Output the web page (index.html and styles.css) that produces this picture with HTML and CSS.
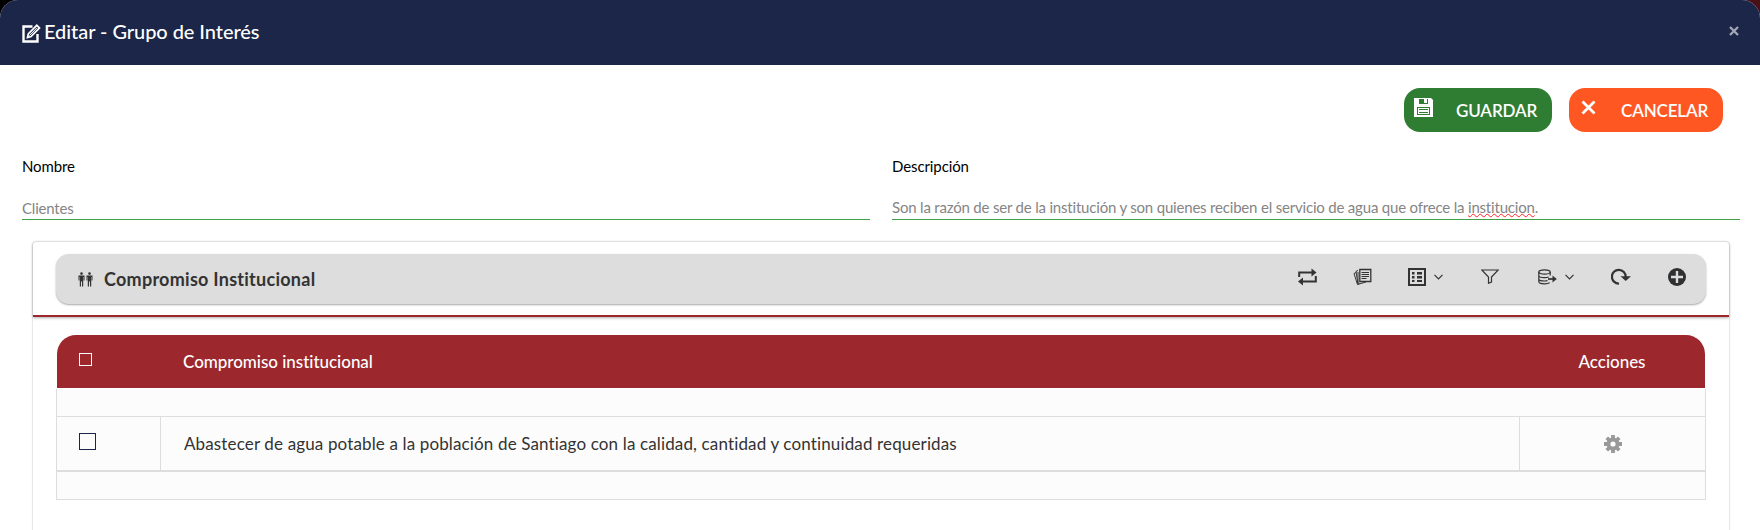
FILE: index.html
```html
<!DOCTYPE html>
<html lang="es">
<head>
<meta charset="utf-8">
<title>Editar - Grupo de Interés</title>
<link rel="stylesheet" href="styles.css">
</head>
<body>
<div class="modal">
  <header class="modal-header">
    <svg class="edit-icon" width="19" height="19" viewBox="0 0 19 19" fill="none" stroke="#fff"><path d="M10.500 2.500H1.500v15h14V10" stroke-width="2.400"/><path d="M5.500 13.500l.8-3.700L14.800 1.300l2.700 2.600L9 12.500z" stroke-width="1.700"/><path d="M7.500 11.500l7.500-7.700" stroke-width="1"/></svg>
    <h1 class="modal-title">Editar - Grupo de Interés</h1>
    <svg class="close" width="10" height="10" viewBox="0 0 10 10" stroke="#a4a8b6" stroke-width="2.300"><path d="M1 1l8 8M9 1L1 9"/></svg>
  </header>
  <div class="actions">
    <button class="btn save"><svg width="19" height="19" viewBox="0 0 19 19"><path fill="#fff" d="M0 0h17l2 2v17H0z"/><path fill="#2e7d32" d="M5 1h9v5H5zM3 9h13v8H3z"/><path fill="#fff" d="M10 1h3v4h-3zM4 10h11v6H4z"/><path stroke="#2e7d32" d="M5 11.500h9M5 14.500h9"/></svg><span class="save-text">GUARDAR</span></button>
    <button class="btn cancel"><svg width="15" height="15" viewBox="0 0 15 15" stroke="#fff" stroke-width="2.800"><path d="M1.500 1.500l12 12M13.500 1.500l-12 12"/></svg><span class="cancel-text">CANCELAR</span></button>
  </div>
  <div class="fields">
    <div class="field"><label class="name-label">Nombre</label><div class="value"><span class="name-value">Clientes</span></div></div>
    <div class="field"><label class="desc-label">Descripción</label><div class="value area"><span class="desc-value">Son la razón de ser de la institución y son quienes reciben el servicio de agua que ofrece la <span class="misspelt">institucion</span>.</span></div></div>
  </div>
  <section class="card">
    <div class="card-head">
      <div class="toolbar">
        <svg class="people" width="15" height="15" viewBox="0 0 15 15" fill="#333"><circle cx="3.500" cy="1.600" r="1.300"/><circle cx="11.500" cy="1.600" r="1.300"/><path d="M.5 3.500h6V8.500h-.9V5h-.4v9.500H4V9.500h-1v5H1.800V5h-.4v3.500H.5zM8.500 3.500h6V8.500h-.9V5h-.4v9.500H12V9.500h-1v5H9.800V5h-.4v3.500h-.9z"/></svg>
        <h2 class="toolbar-title">Compromiso Institucional</h2>
        <div class="tools">
          <svg width="19" height="18" viewBox="0 0 19 18"><path d="M1.200 9V4.500H14M17.800 8v5.500H5" fill="none" stroke="#333" stroke-width="2"/><path fill="#333" d="M13.500.5l5 4-5 4zM5 9.500l-5 4 5 4z"/></svg>
          <svg class="t-docs" width="19" height="18" viewBox="0 0 19 18" fill="none" stroke="#333"><path d="M6.800 1.500h11v12h-11z" stroke-width="1.300"/><path d="M8.500 4.500h7.500M8.500 6.500h7.500M8.500 8.500h7.500M8.500 10.500h5"/><path d="M5 2.500l-2 .8 2 13 8-2.300M3 4.500l-2 1 3.500 11 1.200-.4M5 4v10.500l1.500 1.200"/></svg>
          <span class="pair t-list"><svg width="18" height="18" viewBox="0 0 18 18" fill="#333"><path d="M1 1h16v16H1z" fill="none" stroke="#333" stroke-width="2"/><path d="M4 4h2.500v2.500H4zm5 0h5v2.500H9zM4 8h2.500v2.500H4zm5 0h5v2.500H9zM4 12h2.500v2H4zm5 0h5v2H9z"/></svg><svg width="9" height="6" viewBox="0 0 9 6" fill="none" stroke="#333" stroke-width="1.200"><path d="M.5.8l4 4 4-4"/></svg></span>
          <svg class="t-filter" width="18" height="15" viewBox="0 0 18 15" fill="none" stroke="#333"><path d="M.8 1h16.400L10.500 8v5l-3 1.200V8z" stroke-width="1.200"/></svg>
          <span class="pair t-db"><svg width="19" height="16" viewBox="0 0 19 16" fill="none" stroke="#333" stroke-width="1.200"><ellipse cx="6.500" cy="3" rx="5.700" ry="2.200"/><path d="M.8 3v9.500c0 1.300 2.500 2.300 5.700 2.300 2.300 0 4.300-.4 5.200-1.200M12.200 3v3.500M.8 6.500c0 1.300 2.500 2.200 5.700 2.200 1.700 0 3.200-.2 4.200-.7M.8 9.700C.8 11 3.300 12 6.500 12c1.200 0 2.200-.1 3-.3"/><path d="M10 10h5.500" stroke-width="1.700"/><path d="M14.500 6.500L18.800 10l-4.300 3.500z" fill="#333" stroke="none"/></svg><svg width="9" height="6" viewBox="0 0 9 6" fill="none" stroke="#333" stroke-width="1.200"><path d="M.5.8l4 4 4-4"/></svg></span>
          <svg class="t-redo" width="20" height="17" viewBox="0 0 20 17"><path d="M8 15.600A6.900 6.900 0 1 1 14.700 9" fill="none" stroke="#333" stroke-width="2.200"/><path fill="#333" d="M9.500 8.300H20l-5.300 4.800z"/></svg>
          <svg class="t-add" width="18" height="18" viewBox="0 0 18 18"><circle cx="9" cy="9" r="9" fill="#2f3032"/><path d="M9 3v12M3 9h12" stroke="#ddd" stroke-width="2.400"/></svg>
        </div>
      </div>
    </div>
    <div class="grid">
      <div class="row grid-head"><div class="cell"><span class="check-head"></span></div><div class="cell"><span class="col-title">Compromiso institucional</span></div><div class="cell last"><span class="col-actions">Acciones</span></div></div>
      <div class="spacer"></div>
      <div class="row body-row"><div class="cell"><span class="check"></span></div><div class="cell"><span class="row-text">Abastecer de agua potable a la población de Santiago con la calidad, cantidad y continuidad requeridas</span></div><div class="cell last"><svg width="18" height="18" viewBox="-9 -9 18 18" fill="#999"><circle r="6.500"/><path d="M-1.900-9h3.800v18h-3.800zM-9-1.900H9v3.800H-9z"/><path transform="rotate(45)" d="M-1.900-8.800h3.800v17.600h-3.800zM-8.800-1.900H8.800v3.800H-8.800z"/><circle r="2.600" fill="#fcfcfc"/></svg></div></div>
      <div class="spacer foot"></div>
    </div>
  </section>
</div>
</body>
</html>
```
FILE: styles.css
```css
* { box-sizing: border-box; }
body {
  margin: 0;
  height: 530px;
  overflow: hidden;
  background: linear-gradient(90deg, #000 50%, #4a1018 50%);
  font-family: Lato, sans-serif;
  font-variant-ligatures: none;
  color: #333;
}
.modal { height: 530px; background: #fff; border-radius: 18px 18px 0 0; overflow: hidden; }
.modal-header { height: 65px; padding: 0 21px 0 22px; display: flex; align-items: center; background: #1b2649; color: #fff; }
.edit-icon { margin-top: 2px; }
.modal-title { margin: 0 auto 3px 3px; font-size: 20px; line-height: 24px; font-weight: 500; letter-spacing: -.06px; white-space: nowrap; }
.close { margin-bottom: 4px; }
.actions { display: flex; justify-content: flex-end; gap: 17px; padding: 23px 37px 0 0; }
.btn { height: 44px; border: 0; border-radius: 16px; display: flex; color: #fff; font: 600 17px/44px Lato, sans-serif; letter-spacing: -.15px; padding: 0; white-space: nowrap; }
.save { width: 148px; padding: 10px 0 0 10px; background: #2e7d32; }
.save-text { margin: -9px 0 0 23px; }
.cancel { width: 154px; padding: 12px 0 0 12px; background: #ff5722; }
.cancel-text { margin: -11px 0 0 25px; }
.fields { display: grid; grid-template-columns: 848px 848px; gap: 22px; padding: 24px 22px 0; }
.field label { display: block; height: 20px; font-size: 15px; line-height: 20px; letter-spacing: -.1px; color: #000; }
.value { height: 44px; padding-top: 22px; border-bottom: 1px solid #43a047; color: #858585; font-size: 15px; line-height: 20px; letter-spacing: -.2px; white-space: nowrap; }
.area { padding-top: 21px; letter-spacing: -.19px; }
.misspelt { text-decoration: underline wavy #f22 1px; text-underline-offset: 0; text-decoration-skip-ink: none; }
.card { margin: 22px 31px 0 33px; height: 320px; border-radius: 3px; box-shadow: 0 0 2px rgba(0,0,0,.35); }
.card-head { height: 75px; padding: 12px 23px 0; border-bottom: 2px solid #9c272d; box-shadow: 0 1px 3px rgba(0,0,0,.32); border-radius: 3px 3px 0 0; }
.toolbar { height: 50px; padding: 0 20px 0 22px; display: flex; align-items: center; background: #ddd; border-radius: 13px; box-shadow: 0 1px 2px rgba(0,0,0,.35); }
.people { margin-top: 1px; }
.toolbar-title { margin: 0 auto 0 11px; font-size: 18px; line-height: 24px; font-weight: 700; letter-spacing: .26px; white-space: nowrap; }
.tools { display: flex; align-items: center; padding-bottom: 5px; }
.tools svg { display: block; }
.pair { display: flex; align-items: center; gap: 8px; }
.t-docs { margin-left: 36px; }
.t-list { margin-left: 36px; }
.t-filter { margin-left: 38px; }
.t-db { margin-left: 39px; }
.t-redo { margin-left: 37px; }
.t-add { margin-left: 37px; }
.grid { margin: 18px 23px 0 23px; }
.row { display: grid; grid-template-columns: 103px 1fr 186px; }
.cell { display: flex; align-items: center; white-space: nowrap; }
.last { justify-content: center; }
.grid-head { height: 54px; margin: 0 1px; background: #9c272d; background-clip: padding-box; color: #fff; border-radius: 19px 19px 0 0; border-bottom: 1px solid #fff; font-size: 17px; font-weight: 500; letter-spacing: -.03px; }
.grid-head .cell { padding-left: 22px; }
.grid-head .cell + .cell { padding-left: 23px; }
.grid-head .cell.last { padding: 0; }
.check-head { width: 13px; height: 13px; margin-bottom: 4px; border: 1px solid #fff; }
.spacer { height: 28px; background: #fcfcfc; border: 1px solid #ddd; border-top: 0; }
.body-row { height: 55px; background: #fcfcfc; border: solid #ddd; border-width: 0 1px 2px; font-size: 17px; }
.body-row .cell { padding-left: 22px; }
.body-row .cell + .cell { border-left: 1px solid #ddd; padding-left: 23px; }
.body-row .cell.last { padding: 0; }
.row-text { letter-spacing: .14px; }
.check { width: 17px; height: 17px; margin-bottom: 5px; border: 1px solid #1b2649; }
```
